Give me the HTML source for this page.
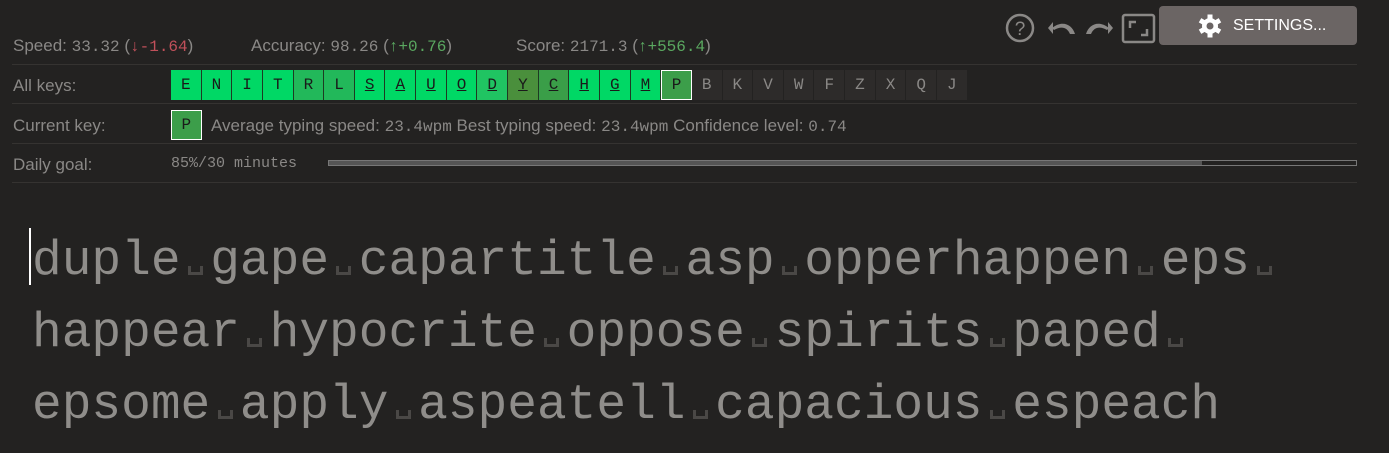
<!DOCTYPE html>
<html><head><meta charset="utf-8"><style>
*{margin:0;padding:0;box-sizing:border-box}
body{width:1389px;height:453px;background:#232221;overflow:hidden;position:relative;font-family:"Liberation Sans",sans-serif;color:#8a8886}
.row{position:absolute;left:12px;width:1345px;border-bottom:1px solid #353331}
.lbl{position:absolute;left:13px;font-size:17px;color:#8a8886}
.mono{font-family:"Liberation Mono",monospace}
.n{font-family:"Liberation Mono",monospace;font-size:16px}
.keys{position:absolute;left:171px;top:70px;display:flex}
.k{flex:0 0 30.65px;width:30.65px;height:30px;font-family:"Liberation Mono",monospace;font-size:16px;color:#1a1a1a;display:flex;align-items:center;justify-content:center;border-right:1px solid #1e3a22;background:#00d865}
.k.u{text-decoration:underline}
.k.d{background:#2d2b2a;color:#8a8886;border-right:1px solid #232221}
.big{position:absolute;left:32px;font-family:"Liberation Mono",monospace;font-size:49.5px;color:#8f8d8a;white-space:pre;line-height:1}
.sp{display:inline-block;width:0.6em;height:0.2em;position:relative}
.sp:after{content:"";position:absolute;left:0.15em;right:0.15em;bottom:-0.02em;height:0.12em;border:3px solid #4a4846;border-top:none}
</style></head><body>
<div class="row" style="top:0;height:65px"></div>
<div class="row" style="top:65px;height:39px"></div>
<div class="row" style="top:104px;height:40px"></div>
<div class="row" style="top:144px;height:39px"></div>

<div class="lbl" style="top:36px">Speed: <span class="n">33.32</span> (<span class="n" style="color:#c0505a">↓-1.64</span>)</div>
<div class="lbl" style="top:36px;left:251px">Accuracy: <span class="n">98.26</span> (<span class="n" style="color:#5aa860">↑+0.76</span>)</div>
<div class="lbl" style="top:36px;left:516px">Score: <span class="n">2171.3</span> (<span class="n" style="color:#5aa860">↑+556.4</span>)</div>

<div class="lbl" style="top:76px">All keys:</div>
<div class="keys">
<div class="k">E</div><div class="k">N</div><div class="k">I</div><div class="k">T</div><div class="k" style="background:#22b85a">R</div><div class="k" style="background:#22b85a">L</div><div class="k u">S</div><div class="k u">A</div><div class="k u">U</div><div class="k u">O</div><div class="k u" style="background:#20c462">D</div><div class="k u" style="background:#4a8f3c">Y</div><div class="k u" style="background:#3a9e48">C</div><div class="k u">H</div><div class="k u">G</div><div class="k u">M</div><div class="k" style="background:#3c9e4a;border:1px solid #fff">P</div>
<div class="k d">B</div><div class="k d">K</div><div class="k d">V</div><div class="k d">W</div><div class="k d">F</div><div class="k d">Z</div><div class="k d">X</div><div class="k d">Q</div><div class="k d">J</div>
</div>

<div class="lbl" style="top:116px">Current key:</div>
<div class="k" style="position:absolute;left:171px;top:110px;background:#3c9e4a;border:1px solid #fff;height:30px">P</div>
<div class="lbl" style="top:116px;left:211px">Average typing speed: <span class="n">23.4wpm</span> Best typing speed: <span class="n">23.4wpm</span> Confidence level: <span class="n">0.74</span></div>

<div class="lbl" style="top:155px">Daily goal:</div>
<div class="mono" style="position:absolute;left:171px;top:155px;font-size:15px;color:#8a8886">85%/30 minutes</div>
<div style="position:absolute;left:328px;top:160px;width:1029px;height:6px;border:1px solid #777"><div style="width:85%;height:100%;background:#555"></div></div>

<svg style="position:absolute;left:1004px;top:12px" width="155" height="34" viewBox="0 0 155 34">
<circle cx="16" cy="16" r="13" fill="none" stroke="#8a8886" stroke-width="2.5"/>
<text x="16" y="23" text-anchor="middle" font-family="Liberation Sans" font-size="19" fill="#8a8886">?</text>
<path d="M44 16 L49 10 L49 22 Z M48 16 C58 8 68 12 71 22 L66 22 C63 15 57 14 50 18 Z" fill="#8a8886"/>
<path d="M109 16 L104 10 L104 22 Z M105 16 C95 8 85 12 82 22 L87 22 C90 15 96 14 103 18 Z" fill="#8a8886"/>
<rect x="119" y="3" width="31" height="27" rx="2" fill="none" stroke="#8a8886" stroke-width="2.5"/>
<path d="M126 16 V10 H132 M143 17 V23 H137" fill="none" stroke="#8a8886" stroke-width="2.5"/>
</svg>
<div style="position:absolute;left:1159px;top:6px;width:198px;height:39px;background:#6b6564;border-radius:4px;color:#fff;font-size:16px;display:flex;align-items:center;padding-left:36px">
<svg style="position:absolute;left:36px;top:8px" width="30" height="24" viewBox="-12 -12 24 24"><g fill="#fff"><circle r="8"/><rect x="-2.5" y="-11.5" width="5" height="23"/><rect x="-2.5" y="-11.5" width="5" height="23" transform="rotate(60)"/><rect x="-2.5" y="-11.5" width="5" height="23" transform="rotate(120)"/></g><circle r="3.5" fill="#6b6564"/></svg>
<span style="margin-left:38px">SETTINGS...</span></div>

<div style="position:absolute;left:29px;top:228px;width:2px;height:57px;background:#fff"></div>
<div class="big" style="top:237px">duple<span class="sp"></span>gape<span class="sp"></span>capartitle<span class="sp"></span>asp<span class="sp"></span>opperhappen<span class="sp"></span>eps<span class="sp"></span></div>
<div class="big" style="top:309px">happear<span class="sp"></span>hypocrite<span class="sp"></span>oppose<span class="sp"></span>spirits<span class="sp"></span>paped<span class="sp"></span></div>
<div class="big" style="top:381px">epsome<span class="sp"></span>apply<span class="sp"></span>aspeatell<span class="sp"></span>capacious<span class="sp"></span>espeach</div>
</body></html>
